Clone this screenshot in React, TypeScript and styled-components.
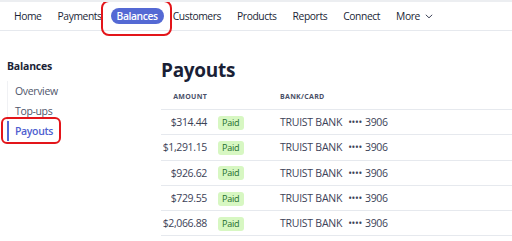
import styled, { createGlobalStyle } from 'styled-components';

interface IPayout {
  amount: string;
  status: string;
  bank: string;
  last4: string;
}

const payouts: IPayout[] = [
  { amount: '$314.44', status: 'Paid', bank: 'TRUIST BANK', last4: '3906' },
  { amount: '$1,291.15', status: 'Paid', bank: 'TRUIST BANK', last4: '3906' },
  { amount: '$926.62', status: 'Paid', bank: 'TRUIST BANK', last4: '3906' },
  { amount: '$729.55', status: 'Paid', bank: 'TRUIST BANK', last4: '3906' },
  { amount: '$2,066.88', status: 'Paid', bank: 'TRUIST BANK', last4: '3906' },
];

const navItems = ['Home', 'Payments', 'Balances', 'Customers', 'Products', 'Reports', 'Connect'];

const GlobalStyle = createGlobalStyle`
  body {
    margin: 0;
    background: #fff;
    font-family: "Open Sans", "Noto Sans", sans-serif;
    color: #3c4257;
  }
`;

const Page = styled.div`
  width: 512px;
  height: 241px;
  overflow: hidden;
  border-top: 2px solid #eceef1;
  box-sizing: border-box;
`;

const Nav = styled.nav`
  display: flex;
  align-items: center;
  height: 28px;
  padding-left: 6px;
  border-bottom: 1px solid #e6e9ee;
`;

const NavItem = styled.div<{ $active?: boolean }>`
  position: relative;
  display: flex;
  align-items: center;
  gap: 5px;
  height: 16px;
  padding: 0 ${(p) => (p.$active ? 6 : 8)}px;
  margin: 0 ${(p) => (p.$active ? 1 : 0)}px;
  border-radius: 8px;
  font-size: 10.3px;
  letter-spacing: -0.4px;
  color: ${(p) => (p.$active ? '#fff' : '#1a1f36')};
  background: ${(p) => (p.$active ? '#5469d4' : 'transparent')};
  font-weight: ${(p) => (p.$active ? 600 : 400)};
`;

const Callout = styled.span<{ $radius: number }>`
  position: absolute;
  border: 2px solid #e3151a;
  border-radius: ${(p) => p.$radius}px;
  pointer-events: none;
`;

const NavCallout = styled(Callout)`
  left: -10px;
  right: -8px;
  top: -8px;
  bottom: -12px;
`;

const Body = styled.div`
  display: flex;
`;

const Sidebar = styled.aside`
  width: 154px;
  padding: 28px 0 0 7px;
`;

const SideTitle = styled.div`
  font-size: 10.5px;
  font-weight: 700;
  letter-spacing: -0.2px;
  color: #1a1f36;
  margin-bottom: 8px;
`;

const SideList = styled.div`
  display: flex;
  flex-direction: column;
  border-left: 1px solid #f0f1f4;
`;

const SideItem = styled.div<{ $active?: boolean }>`
  position: relative;
  height: 20px;
  display: flex;
  align-items: center;
  padding-left: 7px;
  font-size: 10.5px;
  letter-spacing: -0.35px;
  color: ${(p) => (p.$active ? '#4f5fd0' : '#4f566b')};
  font-weight: ${(p) => (p.$active ? 600 : 400)};
  ${(p) => (p.$active ? 'box-shadow: inset 2px 0 0 #5469d4; margin-left: -1px; padding-left: 8px;' : '')}
`;

const SideCallout = styled(Callout)`
  left: -6px;
  top: -4px;
  width: 56px;
  height: 23px;
`;

const Main = styled.main`
  flex: 1;
  padding-top: 26px;
`;

const Title = styled.h1`
  margin: 0 0 5px;
  font-size: 19px;
  font-weight: 700;
  color: #1a1f36;
  letter-spacing: -0.3px;
`;

const Table = styled.table`
  width: 100%;
  border-collapse: collapse;
`;

const Th = styled.th<{ $align?: string }>`
  text-align: ${(p) => p.$align ?? 'left'};
  font-size: 7px;
  font-weight: 700;
  color: #4a5068;
  letter-spacing: 0.3px;
  height: 17px;
  padding: 0 0 4px;
  vertical-align: middle;
  border-bottom: 1px solid #e6e9ee;
`;

const Td = styled.td<{ $align?: string }>`
  text-align: ${(p) => p.$align ?? 'left'};
  font-size: 10.5px;
  letter-spacing: -0.35px;
  color: #3c4257;
  height: 24.3px;
  padding: 0;
  border-bottom: 1px solid #e6e9ee;
`;

const Bank = styled.span`
  letter-spacing: -0.25px;
`;

const Badge = styled.span`
  display: inline-block;
  margin-left: 11px;
  padding: 1px 5px 1px 4px;
  border-radius: 3px;
  background: #d7f7c2;
  color: #236e2c;
  font-size: 9px;
  letter-spacing: -0.2px;
  font-weight: 500;
  line-height: 12px;
`;

const Dots = styled.span`
  margin: 0 3px 0 6px;
  letter-spacing: -0.3px;
  font-size: 10px;
`;

const Chevron = () => (
  <svg width="8" height="5" viewBox="0 0 8 5" fill="none">
    <path d="M0.8 0.8l3.2 3 3.2-3" stroke="#3c4257" strokeWidth="1" />
  </svg>
);

function App() {
  return (
    <Page>
      <GlobalStyle />
      <Nav>
        {navItems.map((item) => (
          <NavItem key={item} $active={item === 'Balances'}>
            {item}
            {item === 'Balances' && <NavCallout $radius={8} />}
          </NavItem>
        ))}
        <NavItem>
          More
          <Chevron />
        </NavItem>
      </Nav>
      <Body>
        <Sidebar>
          <SideTitle>Balances</SideTitle>
          <SideList>
            <SideItem>Overview</SideItem>
            <SideItem>Top-ups</SideItem>
            <SideItem $active>
              Payouts
              <SideCallout $radius={6} />
            </SideItem>
          </SideList>
        </Sidebar>
        <Main>
          <Title>Payouts</Title>
          <Table>
            <colgroup>
              <col style={{ width: 46 }} />
              <col style={{ width: 73 }} />
              <col />
            </colgroup>
            <thead>
              <tr>
                <Th $align="right">AMOUNT</Th>
                <Th />
                <Th>BANK/CARD</Th>
              </tr>
            </thead>
            <tbody>
              {payouts.map((p, index) => (
                <tr key={index}>
                  <Td $align="right">{p.amount}</Td>
                  <Td>
                    <Badge>{p.status}</Badge>
                  </Td>
                  <Td>
                    <Bank>{p.bank}</Bank>
                    <Dots>••••</Dots>
                    {p.last4}
                  </Td>
                </tr>
              ))}
            </tbody>
          </Table>
        </Main>
      </Body>
    </Page>
  );
}

export default App;
